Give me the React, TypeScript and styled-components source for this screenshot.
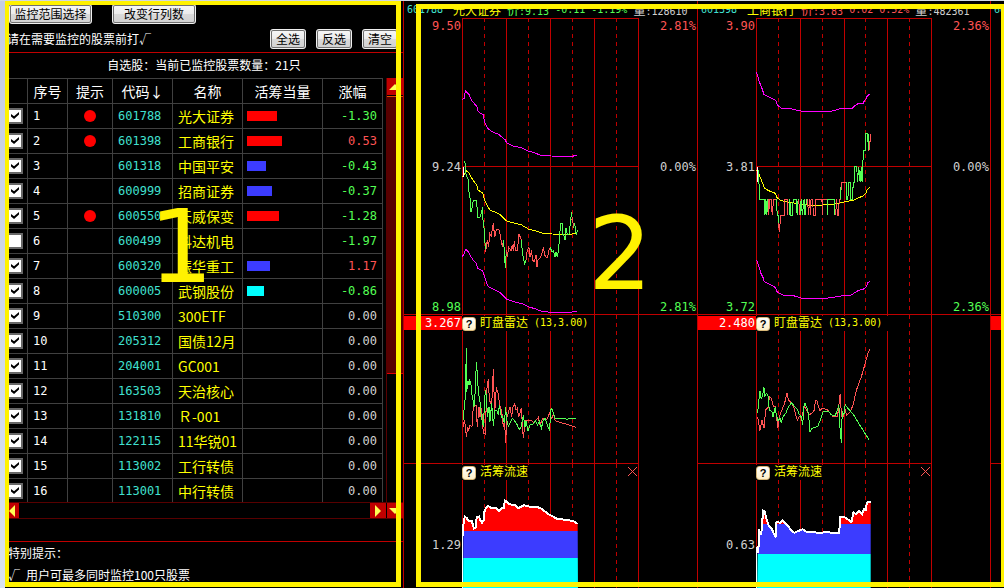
import React, { useState } from "react";
import styled, { createGlobalStyle } from "styled-components";

const RED_LINE = "#c00000";
const DARK_RED = "#580000";
const YELLOW = "#ffff00";
const MARK = "#fff200";
const UP = "#ff5454";
const DOWN = "#54ff54";
const CYAN = "#40e0d0";
const SILVER = "#d0d0d0";
const MONO = `"DejaVu Sans Mono", "Liberation Mono", monospace`;
const CJK = `"Noto Sans CJK SC", "Liberation Sans", sans-serif`;

const Global = createGlobalStyle`
  * { box-sizing: border-box; }
  body { margin: 0; background: #000; color: #fff; font: 12px/14px ${CJK}; overflow: hidden; }
  button, input { font: inherit; margin: 0; }
`;

const Page = styled.div`
  display: flex;
  height: 100vh;
  min-height: 588px;
  border-top: 1px solid #d0d8e4;
`;

const Edge = styled.div`
  flex: 0 0 5px;
  background: linear-gradient(#c4cce2, #d8e2f0);
`;

const Sidebar = styled.aside`
  position: relative;
  flex: 0 0 398px;
  overflow: hidden;
`;

const Frame = styled.div`
  position: absolute;
  inset: 0 2px 1px 0;
  border: solid ${MARK};
  border-width: 4px 5px 5px 4px;
  pointer-events: none;
`;

const BoardFrame = styled(Frame)`
  inset: 3px 0 1px 13px;
  border-width: 5px 3px 5px 5px;
`;

const BigDigit = styled.span<{ $x: number; $y: number }>`
  position: absolute;
  left: ${(p) => p.$x}px;
  top: ${(p) => p.$y}px;
  font: 101px/102px "DejaVu Sans", sans-serif;
  color: ${MARK};
  pointer-events: none;
`;

const Toolbar = styled.div`
  display: flex;
  gap: 20px;
  padding: 3px 4px 0;
`;

const PickRow = styled.div`
  display: flex;
  align-items: center;
  gap: 10px;
  height: 29px;
  padding: 2px 5px 0 2px;
  border-bottom: 1px solid ${RED_LINE};
`;

const PickHint = styled.span`
  flex: 1;
`;

const GreyButton = styled.button<{ $w: number }>`
  width: ${(p) => p.$w}px;
  height: 20px;
  padding: 0;
  border: 2px solid #707070;
  border-radius: 3px;
  outline: 1px solid #f0f0f0;
  outline-offset: -1px;
  background: linear-gradient(#f6f6f6, #ebebeb 50%, #dadada 50%, #d2d2d2);
  color: #000;
  line-height: 14px;
  white-space: nowrap;
`;

const Caption = styled.div`
  height: 25px;
  line-height: 24px;
  text-align: center;
`;

const ListBox = styled.div`
  display: grid;
  grid-template-columns: 1fr 17px;
  grid-template-rows: 424px 17px;
`;

const TableClip = styled.div`
  overflow: hidden;
`;

const Table = styled.table`
  width: 378px;
  table-layout: fixed;
  border-collapse: separate;
  border-spacing: 0;
  border-top: 1px solid #404040;
  font-size: 14px;
`;

const Th = styled.th`
  height: 25px;
  padding: 0;
  border: solid #404040;
  border-width: 0 1px 1px 0;
  font-weight: 400;
  line-height: 20px;
  white-space: nowrap;
`;

const Td = styled.td<{ $color?: string; $align?: string; $mono?: boolean }>`
  height: 25px;
  padding: 0 5px;
  border: solid #404040;
  border-width: 0 1px 1px 0;
  color: ${(p) => p.$color || "#fff"};
  text-align: ${(p) => p.$align || "left"};
  line-height: 20px;
  white-space: nowrap;
  ${(p) => p.$mono && `font-family: ${MONO}; font-size: 12px;`}
`;

const CheckTd = styled(Td)`
  padding: 0 0 0 2px;
`;

const Check = styled.input`
  appearance: none;
  display: block;
  width: 16px;
  height: 16px;
  border: 2px solid #686868;
  background: #fff;
  &:checked::after {
    content: "";
    display: block;
    width: 8px;
    height: 7px;
    margin: 2px;
    background: #000;
    clip-path: polygon(0 28%, 38% 62%, 100% 0, 100% 36%, 38% 100%, 0 66%);
  }
`;

const Dot = styled.span`
  display: block;
  width: 12px;
  height: 12px;
  margin: 0 auto;
  border-radius: 50%;
  background: #f00;
`;

const Bar = styled.span<{ $c: string }>`
  display: block;
  height: 10px;
  margin-left: -1px;
  background: ${(p) => p.$c};
`;

const VScroll = styled.div`
  display: flex;
  flex-direction: column;
  border-left: 1px solid ${DARK_RED};
`;

const Thumb = styled.div`
  height: 278px;
  margin-top: 1px;
  border-top: 1px solid #e05000;
  border-bottom: 1px solid #e00000;
  background: ${DARK_RED};
`;

const HScroll = styled.div`
  display: flex;
  justify-content: space-between;
  border: solid ${DARK_RED};
  border-width: 1px 0;
`;

const ArrowButton = styled.button<{ $w: number; $h: number }>`
  display: flex;
  align-items: center;
  justify-content: center;
  width: ${(p) => p.$w}px;
  height: ${(p) => p.$h}px;
  padding: 0;
  border: 0;
  background: ${RED_LINE};
`;

const Corner = styled(HScroll)`
  padding-left: 1px;
`;

const Notes = styled.div`
  margin-top: 22px;
  padding-left: 3px;
  border-top: 1px solid ${RED_LINE};
  line-height: 22px;
`;

const NoteLine = styled.div`
  display: flex;
  gap: 6px;
`;

const Board = styled.main`
  position: relative;
  flex: 1;
  min-width: 0;
  display: grid;
  grid-template-columns: 294fr 293fr 14fr;
  overflow: hidden;
`;

const Panel = styled.section`
  min-width: 0;
  overflow: hidden;
  border-left: 1px solid ${RED_LINE};
`;

const Head = styled.header`
  display: flex;
  gap: 6px;
  height: 17px;
  padding-left: 3px;
  font-family: ${MONO};
  font-size: 10px;
  line-height: 17px;
  white-space: nowrap;
  color: ${SILVER};
`;

const HeadText = styled.span<{ $color?: string; $w?: number }>`
  color: ${(p) => p.$color || "inherit"};
  ${(p) => p.$w && `min-width: ${p.$w}px;`}
`;

const Cjk = styled.span`
  font-family: ${CJK};
  font-size: 12px;
`;

const Row = styled.div`
  display: grid;
  grid-template-columns: 58px minmax(0, 1fr) 58px;
`;

const Axis = styled.div<{ $line?: boolean }>`
  display: flex;
  flex-direction: column;
  justify-content: space-between;
  padding: 1px 1px 0 0;
  border-bottom: ${(p) => (p.$line ? `1px solid ${RED_LINE}` : "0")};
  font: 12px/14px ${MONO};
  text-align: right;
  color: ${SILVER};
`;

const AxisText = styled.span<{ $color?: string }>`
  color: ${(p) => p.$color || SILVER};
`;

const RadarValue = styled.div`
  margin: 0 -1px 0 0;
  padding-right: 1px;
  background: #f00;
  color: #fff;
`;

const FlowValue = styled.div`
  padding-top: 73px;
`;

const Plot = styled.div`
  position: relative;
`;

const Svg = styled.svg<{ $h: number }>`
  display: block;
  width: 100%;
  height: ${(p) => p.$h}px;
`;

const Legend = styled.div`
  position: absolute;
  left: 0;
  top: 1px;
  display: flex;
  align-items: center;
  gap: 4px;
  height: 15px;
  padding-right: 6px;
  background: #000;
  color: ${YELLOW};
  white-space: nowrap;
`;

const LegendText = styled.span`
  padding-bottom: 3px;
`;

const LegendNumbers = styled.span`
  padding-bottom: 2px;
  margin-left: 2px;
  font: 10px/14px ${MONO};
`;

const Help = styled.button`
  width: 14px;
  height: 14px;
  padding: 0;
  border: 1px solid #d8b878;
  border-radius: 3px;
  background: linear-gradient(#fff, #fff0c8);
  color: #000;
  font: bold 11px/12px "Liberation Sans", sans-serif;
`;

const CloseButton = styled.button`
  position: absolute;
  right: 1px;
  top: 2px;
  width: 11px;
  height: 11px;
  padding: 0;
  border: 0;
  background: none;
  line-height: 0;
`;

type Quote = [string, string, boolean, boolean, number, string, string];

const BLUE = "#3c3cff";

// code, name, watched, alert, bar width, bar colour, change
const quotes: Quote[] = [
  ["601788", "光大证券", true, true, 30, "#f00", "-1.30"],
  ["601398", "工商银行", true, true, 35, "#f00", "0.53"],
  ["601318", "中国平安", true, false, 19, BLUE, "-0.43"],
  ["600999", "招商证券", true, false, 25, BLUE, "-0.37"],
  ["600550", "天威保变", true, true, 32, "#f00", "-1.28"],
  ["600499", "科达机电", false, false, 0, "", "-1.97"],
  ["600320", "振华重工", true, false, 23, BLUE, "1.17"],
  ["600005", "武钢股份", true, false, 17, "#0ff", "-0.86"],
  ["510300", "300ETF", true, false, 0, "", "0.00"],
  ["205312", "国债12月", true, false, 0, "", "0.00"],
  ["204001", "GC001", true, false, 0, "", "0.00"],
  ["163503", "天治核心", true, false, 0, "", "0.00"],
  ["131810", "Ｒ-001", true, false, 0, "", "0.00"],
  ["122115", "11华锐01", true, false, 0, "", "0.00"],
  ["113002", "工行转债", true, false, 0, "", "0.00"],
  ["113001", "中行转债", true, false, 0, "", "0.00"],
];

const columns = [23, 40, 45, 60, 70, 80, 60];
const headings = ["", "序号", "提示", "代码↓", "名称", "活筹当量", "涨幅"];

const changeColor = (v: string) =>
  v.startsWith("-") ? DOWN : v === "0.00" ? SILVER : UP;

interface Chart {
  id: string;
  code: string;
  name: string;
  price: string;
  diff: string;
  pct: string;
  vol: string;
  trend: string;
  left: [string, string, string];
  right: string;
  radarValue: string;
  flowValue: string;
  x: number;
  upper: string;
  lower: string;
  average: string;
  tick: string;
  line: [string, string][];
  radarUp: string;
  radarDown: string;
  flow: string;
  flowEnd: number;
  flowStops: [number, number];
}

const charts: Chart[] = [
  {
    id: "a",
    code: "601788", name: "光大证券", price: "9.13", diff: "-0.11", pct: "-1.19%", vol: "128610",
    trend: DOWN, left: ["9.50", "9.24", "8.98"], right: "2.81%",
    radarValue: "3.267", flowValue: "1.29", x: 186,
    upper: "187,298 192,296 194,282 197,274 200,277 204,281 208,285 212,295 217,305 222,309 228,317 232,322 234,332 240,340 249,343 252,358 256,372 262,383 266,388 280,397 296,403 308,413 316,420 320,429 340,438 364,443 385,453 400,457 420,465 452,468 520,469 522,466 531,466",
    lower: "187,290 192,282 197,268 204,274 210,286 220,301 228,308 233,325 248,332 254,352 262,375 268,382 300,398 320,418 345,426 370,432 385,440 410,448 425,454 455,457 515,457 520,454 531,454",
    average: "187,50 192,44 198,32 205,36 214,52 222,65 230,74 234,90 248,99 254,120 262,138 270,150 300,163 320,183 345,190 365,195 385,207 405,212 425,219 455,222 515,223 520,219 531,219",
    tick: "190,20 190,52",
    line: [
      [DOWN, "193,2 196,12 196,35 201,50 206,62 206,88 210,115 213,157 216,145 219,125 223,120 229,120 232,150 234,172 240,172 244,160 248,140 249,180 253,210 255,250 257,275"],
      [UP, "257,275 262,240 266,262 269,220 274,228 277,205 280,190 284,232 289,208 298,210 303,240 308,262 310,240"],
      [DOWN, "310,240 313,270 316,325 318,290 320,270"],
      [UP, "320,270 322,290 326,262 333,272 337,255 340,272 343,243 346,270 352,272 357,222 364,240"],
      [DOWN, "364,240 368,285 374,310 378,300"],
      [UP, "378,300 382,270 387,262 390,290 395,270 397,300 403,305 408,285 411,322 414,300 420,295 425,285 430,262 434,285 438,292 443,292 447,270 451,262"],
      [DOWN, "451,262 455,275 460,273 465,290 468,275 472,292 476,265 479,225 482,190 487,190 488,222 491,225 495,240 498,205 502,225 508,222 511,185 515,157"],
      [UP, "515,180 518,172 520,205"],
      [DOWN, "520,205 524,190 527,215 530,222 532,210"],
    ],
    radarUp: "190,350 193,330 197,355 199,380 203,352 206,360 210,345 216,350 220,290 228,285 232,350 237,290 240,320 245,295 250,370 256,372 260,240 265,208 268,270 275,285 280,178 284,310 289,232 294,250 300,288 305,305 308,330 310,350 314,340 317,400 320,325 326,305 330,290 335,322 338,292 344,282 348,300 352,295 356,320 360,308 364,295 370,385 374,345 378,330 385,330 395,332 402,340 410,328 415,322 420,345 428,325 440,330 448,310 455,325 460,312 466,332 490,340 510,346 528,352",
    radarDown: "190,330 192,300 195,270 197,215 199,115 200,245 204,212 207,225 209,208 213,225 215,250 219,270 222,290 226,240 229,155 232,190 235,245 240,275 244,320 250,350 253,290 256,240 260,265 262,320 267,290 270,335 275,280 280,347 285,300 290,300 295,315 298,285 302,310 305,322 308,320 313,340 317,292 320,330 325,348 332,335 337,325 343,332 352,345 357,358 362,355 370,315 375,350 378,333 384,362 390,345 400,342 406,333 412,345 418,335 424,355 430,330 436,325 442,345 449,362 452,300 455,295 460,310 465,325 495,325 500,328 510,325 528,325",
    flow: "190,258 190,225 194,200 200,204 205,212 215,212 222,235 227,232 230,202 237,200 241,210 246,218 251,212 254,180 264,167 272,173 290,175 297,183 303,176 311,174 315,152 321,155 328,163 345,165 355,174 372,166 390,170 420,173 432,182 445,192 470,206 500,210 520,213 533,222",
    flowEnd: 534,
    flowStops: [243, 323],
  },
  {
    id: "b",
    code: "601398", name: "工商银行", price: "3.83", diff: "0.02", pct: "0.52%", vol: "482361",
    trend: UP, left: ["3.90", "3.81", "3.72"], right: "2.36%",
    radarValue: "2.480", flowValue: "0.63", x: 182,
    upper: "184,217 188,232 193,248 200,265 206,283 215,288 232,296 243,303 246,314 258,325 285,326 318,333 345,336 412,333 440,325 472,325 480,317 490,311 505,310 510,301 515,296 518,286 525,284",
    lower: "184,300 190,318 197,340 203,352 207,365 220,371 240,382 246,396 262,405 295,407 318,414 400,414 440,408 470,405 480,398 492,391 505,388 515,380 519,368 525,364",
    average: "184,30 190,40 196,55 203,72 207,84 220,92 240,100 246,114 258,122 290,128 318,133 340,135 380,135 430,131 450,125 475,121 490,114 505,108 514,98 518,88 525,83",
    tick: "187,20 187,66",
    line: [
      [DOWN, "187,20 190,50 191,70 194,118 206,118 208,118 209,166 212,118 215,166 216,118"],
      [UP, "219,118 220,166 223,118 228,118 231,166 235,118 244,118"],
      [DOWN, "244,118 246,166 250,166 250,190"],
      [UP, "250,190 253,216 256,166 268,166 269,118 276,118 277,166"],
      [DOWN, "282,166 284,118 287,166 292,166 294,118 304,118 306,166 309,118"],
      [UP, "311,120 314,166"],
      [DOWN, "316,166 318,118 322,166 327,118 330,166 334,118"],
      [UP, "338,118 340,166 344,118 346,166 348,118 353,118 355,166 361,166 363,118 381,118 382,166 384,118 396,118"],
      [DOWN, "397,118 397,166 399,118 418,118 420,166"],
      [UP, "423,166 424,118 428,166 431,166 433,118 437,118"],
      [DOWN, "437,118 438,94 439,68"],
      [UP, "441,90 441,66 454,66"],
      [DOWN, "454,66 454,118 459,118 462,68 466,68 467,118 473,118 474,90 476,68 479,66 480,20 486,20 488,66 492,20 496,66 500,20 502,66 504,20 506,-28 511,-28 512,-80 518,-80 519,-55 520,-78 520,-30"],
      [UP, "520,-30 523,-30 524,-55 526,-55 526,-78"],
    ],
    radarUp: "187,320 194,362 200,330 206,355 211,300 220,290 222,258 228,265 235,290 240,290 248,355 253,320 260,300 268,282 275,248 280,270 290,280 296,292 302,315 307,330 312,320 320,322 328,290 335,300 342,315 352,308 358,300 361,272 366,272 370,290 375,302 382,295 396,298 402,305 415,320 428,320 436,252 440,320 446,320 450,295 455,315 465,308 475,285 485,240 500,200 510,165 520,130 526,118",
    radarDown: "187,310 190,275 194,243 198,268 202,255 206,232 209,258 213,250 218,255 222,300 230,305 233,322 240,292 243,312 248,332 255,325 258,337 265,318 272,310 280,290 290,278 298,290 305,295 312,312 318,320 323,345 326,290 330,280 338,300 342,330 345,367 350,355 360,352 368,350 378,325 385,303 400,303 410,315 420,318 428,300 432,285 436,365 440,400 442,305 447,315 451,284 460,296 475,312 500,353 524,391",
    flow: "187,310 187,290 191,288 191,238 196,255 200,235 203,182 208,185 213,205 220,225 230,238 241,262 244,216 255,218 262,212 270,220 280,230 290,243 298,248 310,243 323,238 335,246 355,246 370,249 400,246 410,249 433,249 436,202 448,201 460,209 470,216 476,187 484,193 494,183 502,193 508,177 514,180 516,158 528,155",
    flowEnd: 528,
    flowStops: [221, 312],
  },
];

const Stroke = ({ pts, color, w = 1 }: { pts: string; color: string; w?: number }) => (
  <polyline
    points={pts}
    fill="none"
    stroke={color}
    strokeWidth={w}
    vectorEffect="non-scaling-stroke"
    shapeRendering="crispEdges"
  />
);

// Plot units: three to a pixel, eight time slots across.
const Grid = ({ h, from = 0 }: { h: number; from?: number }) => (
  <g stroke={RED_LINE} strokeWidth={1}>
    {[0, 1, 2, 3, 4, 5, 6, 7, 8].map((i) => (
      <line
        key={i}
        x1={i * 66 + 1.5}
        x2={i * 66 + 1.5}
        y1={from}
        y2={h}
        strokeDasharray={i % 2 ? "4 4" : undefined}
        vectorEffect="non-scaling-stroke"
        shapeRendering="crispEdges"
      />
    ))}
  </g>
);

const HLine = ({ y }: { y: number }) => (
  <line x1={0} x2={531} y1={y} y2={y} stroke={RED_LINE} vectorEffect="non-scaling-stroke" shapeRendering="crispEdges" />
);

const box = (h: number) => ({
  $h: h,
  viewBox: `0 0 531 ${h * 3}`,
  preserveAspectRatio: "none",
  "aria-hidden": true,
});

function StockPanel({ c }: { c: Chart }) {
  const start = c.x + 3;
  return (
    <Panel>
      <Head>
        <HeadText $color={CYAN} $w={40}>{c.code}</HeadText>
        <HeadText $color={YELLOW} $w={48}><Cjk>{c.name}</Cjk></HeadText>
        <HeadText $color={c.trend}><Cjk>价</Cjk>:{c.price}</HeadText>
        <HeadText $color={c.trend}>{c.diff}</HeadText>
        <HeadText $color={c.trend}>{c.pct}</HeadText>
        <HeadText><Cjk>量</Cjk>:{c.vol}</HeadText>
      </Head>
      <Row>
        <Axis $line>
          <AxisText $color={UP}>{c.left[0]}</AxisText>
          <AxisText>{c.left[1]}</AxisText>
          <AxisText $color={DOWN}>{c.left[2]}</AxisText>
        </Axis>
        <Plot>
          <Svg {...box(297)}>
            <Grid h={891} />
            <HLine y={1.5} />
            <HLine y={445.5} />
            <HLine y={889.5} />
            <g transform={`translate(${-c.x} -54)`}>
              <Stroke pts={c.upper} color="#ff00ff" />
            </g>
            <g transform={`translate(${-c.x} 426)`}>
              <Stroke pts={c.lower} color="#ff00ff" />
              <Stroke pts={c.average} color={YELLOW} />
              {c.line.map(([color, pts], i) => (
                <Stroke key={i} pts={pts} color={color} />
              ))}
              <Stroke pts={c.tick} color="#fff" />
            </g>
          </Svg>
        </Plot>
        <Axis $line>
          <AxisText $color={UP}>{c.right}</AxisText>
          <AxisText>0.00%</AxisText>
          <AxisText $color={DOWN}>{c.right}</AxisText>
        </Axis>
      </Row>
      <Row>
        <Axis $line>
          <RadarValue>{c.radarValue}</RadarValue>
        </Axis>
        <Plot>
          <Svg {...box(149)}>
            <Grid h={447} />
            <HLine y={445.5} />
            <g transform={`translate(${-c.x} -15)`}>
              <Stroke pts={c.radarUp} color={UP} />
              <Stroke pts={c.radarDown} color={DOWN} />
            </g>
          </Svg>
          <Legend>
            <Help aria-label="盯盘雷达说明">?</Help>
            <LegendText>盯盘雷达</LegendText>
            <LegendNumbers>(13,3.00)</LegendNumbers>
          </Legend>
        </Plot>
        <Axis />
      </Row>
      <Row>
        <Axis>
          <FlowValue>{c.flowValue}</FlowValue>
        </Axis>
        <Plot>
          <Svg {...box(124)}>
            <defs>
              <linearGradient id={`flow-${c.id}`} gradientUnits="userSpaceOnUse" x1="0" x2="0" y1="0" y2="450">
                <stop offset={c.flowStops[0] / 450} stopColor="#f00" />
                <stop offset={c.flowStops[0] / 450} stopColor={BLUE} />
                <stop offset={c.flowStops[1] / 450} stopColor={BLUE} />
                <stop offset={c.flowStops[1] / 450} stopColor="#0ff" />
              </linearGradient>
            </defs>
            <Grid h={372} />
            <g transform={`translate(${-c.x} -42)`}>
              <polygon points={`${start},450 ${c.flow} ${c.flowEnd},450`} fill={`url(#flow-${c.id})`} />
              <Stroke pts={c.flow} color="#fff" w={2} />
              <Stroke pts={`${c.x + 2},${c.id === "a" ? 228 : 290} ${c.x + 2},450`} color="#fff" />
            </g>
          </Svg>
          <Legend>
            <Help aria-label="活筹流速说明">?</Help>
            <LegendText>活筹流速</LegendText>
          </Legend>
          <CloseButton aria-label="关闭">
            <svg width="11" height="11" viewBox="0 0 11 11" stroke={UP} shapeRendering="crispEdges">
              <path d="M1 1 10 10M10 1 1 10" />
            </svg>
          </CloseButton>
        </Plot>
        <Axis />
      </Row>
    </Panel>
  );
}

const Arrow = ({ d }: { d: string }) => (
  <svg width="12" height="12" viewBox="0 0 12 12" fill="#ffff54" aria-hidden="true">
    <path d={d} />
  </svg>
);

export default function App() {
  const [picked, setPicked] = useState(quotes.map((q) => q[2]));
  return (
    <Page>
      <Global />
      <Edge />
      <Sidebar>
        <Toolbar>
          <GreyButton $w={83}>监控范围选择</GreyButton>
          <GreyButton $w={84}>改变行列数</GreyButton>
        </Toolbar>
        <PickRow>
          <PickHint>请在需要监控的股票前打√</PickHint>
          <GreyButton $w={36} onClick={() => setPicked(picked.map(() => true))}>全选</GreyButton>
          <GreyButton $w={36} onClick={() => setPicked(picked.map((v) => !v))}>反选</GreyButton>
          <GreyButton $w={36} onClick={() => setPicked(picked.map(() => false))}>清空</GreyButton>
        </PickRow>
        <Caption>自选股：当前已监控股票数量：21只</Caption>
        <ListBox>
          <TableClip>
            <Table>
              <colgroup>
                {columns.map((w, i) => (
                  <col key={i} width={w} />
                ))}
              </colgroup>
              <thead>
                <tr>
                  {headings.map((h) => (
                    <Th key={h} scope="col">{h}</Th>
                  ))}
                </tr>
              </thead>
              <tbody>
                {quotes.map(([code, name, , alert, width, color, change], i) => (
                  <tr key={code}>
                    <CheckTd>
                      <Check
                        type="checkbox"
                        aria-label={name}
                        checked={picked[i]}
                        onChange={() => setPicked(picked.map((v, k) => (k === i ? !v : v)))}
                      />
                    </CheckTd>
                    <Td $mono>{i + 1}</Td>
                    <Td>{alert && <Dot />}</Td>
                    <Td $mono $color={CYAN}>{code}</Td>
                    <Td $color={YELLOW}>{name}</Td>
                    <Td>{width > 0 && <Bar $c={color} style={{ width }} />}</Td>
                    <Td $mono $align="right" $color={changeColor(change)}>{change}</Td>
                  </tr>
                ))}
              </tbody>
            </Table>
          </TableClip>
          <VScroll>
            <ArrowButton $w={16} $h={17} aria-label="向上滚动"><Arrow d="M6 3 12 9H0z" /></ArrowButton>
            <Thumb />
          </VScroll>
          <HScroll>
            <ArrowButton $w={14} $h={15} aria-label="向左滚动"><Arrow d="M9 0V12L3 6z" /></ArrowButton>
            <ArrowButton $w={16} $h={15} aria-label="向右滚动"><Arrow d="M3 0V12L9 6z" /></ArrowButton>
          </HScroll>
          <Corner>
            <ArrowButton $w={16} $h={15} aria-label="向下滚动"><Arrow d="M0 3H12L6 9z" /></ArrowButton>
          </Corner>
        </ListBox>
        <Notes>
          <div>特别提示：</div>
          <NoteLine>
            <span>√</span>
            <span>用户可最多同时监控100只股票</span>
          </NoteLine>
        </Notes>
        <Frame />
        <BigDigit $x={144} $y={195}>1</BigDigit>
      </Sidebar>
      <Board>
        {charts.map((c) => (
          <StockPanel key={c.id} c={c} />
        ))}
        <Panel>
          <Head><HeadText $color={CYAN}>601318</HeadText></Head>
          <Row>
            <Axis $line><AxisText>&nbsp;</AxisText></Axis>
            <Plot><Svg {...box(297)} /></Plot>
          </Row>
          <Row>
            <Axis $line><RadarValue>&nbsp;</RadarValue></Axis>
            <Plot><Svg {...box(149)} /></Plot>
          </Row>
        </Panel>
        <BoardFrame />
        <BigDigit $x={185} $y={202}>2</BigDigit>
      </Board>
    </Page>
  );
}
